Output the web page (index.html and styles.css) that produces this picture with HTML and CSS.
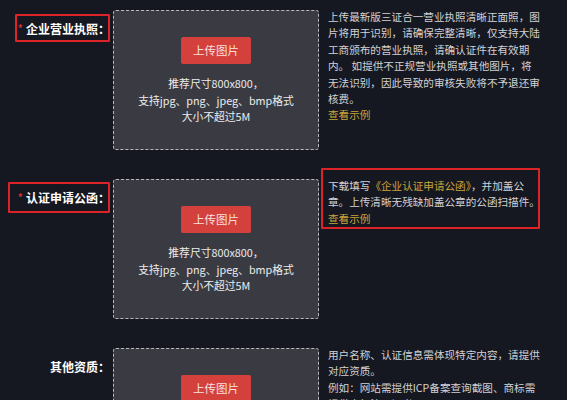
FILE: index.html
```html
<!DOCTYPE html>
<html lang="zh-CN">
<head>
<meta charset="utf-8">
<title>资质上传</title>
<link rel="stylesheet" href="styles.css">
</head>
<body>
<div class="form">
  <div class="row">
    <div class="label"><span class="req">*</span>企业营业执照：</div>
    <div class="upload">
      <div class="btn">上传图片</div>
      <div class="tip">推荐尺寸800x800，<br>支持jpg、png、jpeg、bmp格式<br>大小不超过5M</div>
    </div>
    <div class="desc">上传最新版三证合一营业执照清晰正面照，图片将用于识别，请确保完整清晰，仅支持大陆工商颁布的营业执照，请确认证件在有效期内。 如提供不正规营业执照或其他图片，将无法识别，因此导致的审核失败将不予退还审核费。<br><span class="link">查看示例</span></div>
    <div class="mark mark-l1"></div>
  </div>
  <div class="row">
    <div class="label"><span class="req">*</span>认证申请公函：</div>
    <div class="upload">
      <div class="btn">上传图片</div>
      <div class="tip">推荐尺寸800x800，<br>支持jpg、png、jpeg、bmp格式<br>大小不超过5M</div>
    </div>
    <div class="desc">下载填写<span class="link">《企业认证申请公函》</span>，并加盖公章。上传清晰无残缺加盖公章的公函扫描件。<br><span class="link">查看示例</span></div>
    <div class="mark mark-l2"></div>
    <div class="mark mark-d2"></div>
  </div>
  <div class="row">
    <div class="label">其他资质：</div>
    <div class="upload">
      <div class="btn">上传图片</div>
      <div class="tip">推荐尺寸800x800，<br>支持jpg、png、jpeg、bmp格式<br>大小不超过5M</div>
    </div>
    <div class="desc">用户名称、认证信息需体现特定内容，请提供对应资质。<br>例如：网站需提供ICP备案查询截图、商标需提供商标注册证书。</div>
  </div>
</div>
</body>
</html>
```
FILE: styles.css
```css
html, body {
  margin: 0;
  padding: 0;
  background: #161821;
  font-family: "Noto Sans CJK SC", "Noto Sans", sans-serif;
  overflow: hidden;
}
.form {
  padding-top: 10px;
}
.row {
  position: relative;
  display: flex;
  align-items: flex-start;
  margin-bottom: 29px;
}
.label {
  width: 110px;
  padding-right: 3px;
  padding-top: 9px;
  text-align: right;
  font-size: 12px;
  line-height: 20px;
  font-weight: 700;
  color: #ffffff;
  flex-shrink: 0;
}
.req {
  color: #e0363a;
  font-weight: 400;
  margin-right: 3px;
}
.upload {
  box-sizing: border-box;
  width: 206px;
  height: 140px;
  flex-shrink: 0;
  border: 1px dashed #b9b9bd;
  border-radius: 3px;
  background: #3a3b42;
  padding-top: 26px;
  display: flex;
  flex-direction: column;
  align-items: center;
}
.btn {
  width: 70px;
  height: 27px;
  line-height: 27px;
  text-align: center;
  background: #d4403b;
  color: #f6e0df;
  font-size: 11.5px;
  border-radius: 2px;
}
.tip {
  margin-top: 11px;
  text-align: center;
  font-size: 10.8px;
  line-height: 16.5px;
  color: #ececec;
}
.desc {
  margin-left: 9px;
  margin-top: -1px;
  width: 213.5px;
  font-size: 10.6px;
  line-height: 16.4px;
  color: #d2d2d4;
}
.link {
  color: #c9a53c;
}
.mark {
  position: absolute;
  box-sizing: border-box;
  border: 2px solid #dc2328;
  border-radius: 1px;
}
.mark-l1 {
  left: 15px;
  top: 4px;
  width: 95px;
  height: 28px;
}
.mark-l2 {
  left: 8px;
  top: 3px;
  width: 102px;
  height: 31px;
}
.mark-d2 {
  left: 321px;
  top: -11px;
  width: 219px;
  height: 61px;
}
```
